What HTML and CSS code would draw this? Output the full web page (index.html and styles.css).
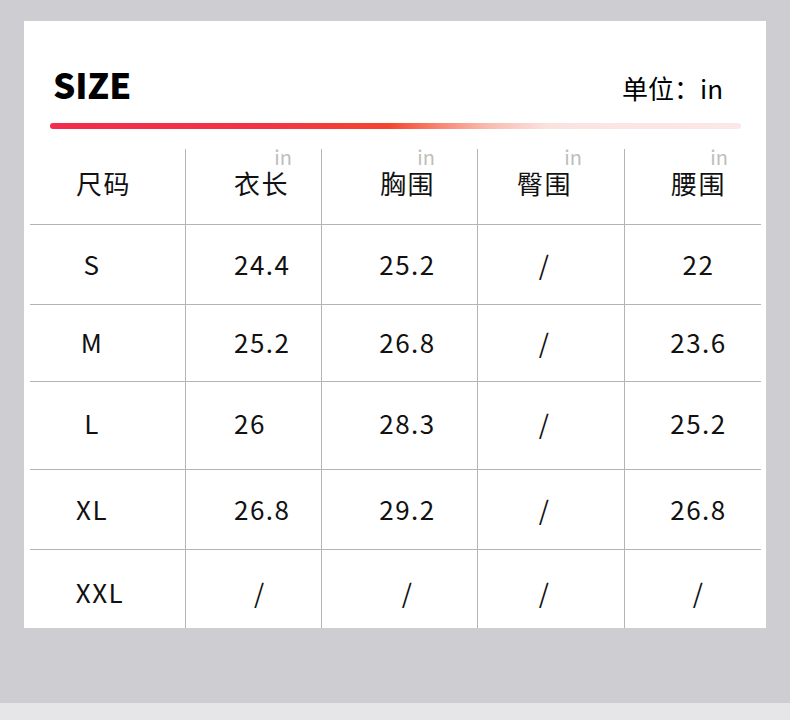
FILE: index.html
```html
<!DOCTYPE html>
<html lang="zh-CN">
<head>
<meta charset="utf-8">
<title>SIZE</title>
<link rel="stylesheet" href="styles.css">
</head>
<body>
<div class="page">
  <div class="card">
    <div class="head">
      <h1 class="title">SIZE</h1>
      <div class="unit-note">单位：in</div>
    </div>
    <div class="bar"></div>
    <div class="table">
      <div class="cell hd c1 hd1">尺码</div>
      <div class="cell hd c2">衣长<span class="in in2">in</span></div>
      <div class="cell hd c3">胸围<span class="in in3">in</span></div>
      <div class="cell hd c4">臀围<span class="in in4">in</span></div>
      <div class="cell hd c5">腰围<span class="in in5">in</span></div>

      <div class="cell c1">S</div>
      <div class="cell c2">24.4</div>
      <div class="cell c3">25.2</div>
      <div class="cell c4">/</div>
      <div class="cell c5">22</div>

      <div class="cell c1">M</div>
      <div class="cell c2">25.2</div>
      <div class="cell c3">26.8</div>
      <div class="cell c4">/</div>
      <div class="cell c5">23.6</div>

      <div class="cell c1 up">L</div>
      <div class="cell c2 up">26</div>
      <div class="cell c3 up">28.3</div>
      <div class="cell c4 up">/</div>
      <div class="cell c5 up">25.2</div>

      <div class="cell c1">XL</div>
      <div class="cell c2">26.8</div>
      <div class="cell c3">29.2</div>
      <div class="cell c4">/</div>
      <div class="cell c5">26.8</div>

      <div class="cell c1 xxl down">XXL</div>
      <div class="cell c2 slash down">/</div>
      <div class="cell c3 down">/</div>
      <div class="cell c4 down">/</div>
      <div class="cell c5 down">/</div>
    </div>
  </div>
</div>
<div class="strip"></div>
</body>
</html>
```

FILE: styles.css
```css
* { box-sizing: border-box; }

html, body {
  margin: 0;
  padding: 0;
  background: #e6e6e8;
}

body {
  font-family: "Noto Sans CJK SC", "Noto Sans", sans-serif;
  color: #111;
}

.page {
  height: 703px;
  background: #cdcdd2;
  padding-top: 21px;
}

.strip {
  height: 17px;
  background: #e6e6e8;
}

.card {
  margin-left: 24px;
  width: 742px;
  height: 607px;
  background: #fff;
  overflow: hidden;
}

.head {
  display: flex;
  justify-content: space-between;
  align-items: baseline;
  padding: 40px 43px 0 29px;
  height: 102px;
}

.title {
  margin: 0;
  font-size: 35px;
  font-weight: 900;
  line-height: 46px;
  color: #000;
}

.unit-note {
  font-size: 26px;
  line-height: 46px;
  color: #000;
}

.bar {
  height: 6px;
  margin: 0 25px 0 26px;
  border-radius: 3px;
  background: linear-gradient(to right,
    #f22c4c 0%,
    #f33344 30%,
    #f4452f 49%,
    #f7836f 56%,
    #f9b9ad 63%,
    #fbe2df 72%,
    #fce8e8 100%);
}

.table {
  margin: 20px 5px 0 6px;
  display: grid;
  grid-template-columns: 155px 136px 156px 147px 137px;
  grid-template-rows: 75px 80px 77px 88px 80px 79px;
}

.cell {
  display: flex;
  align-items: center;
  justify-content: center;
  font-size: 26px;
  line-height: 26px;
  letter-spacing: 1.5px;
  color: #111;
  border-top: 1px solid #b4b4b4;
  padding-bottom: 2px;
}

.cell.up { padding-bottom: 6px; }
.cell.down { padding-bottom: 0; padding-top: 6px; }

.cell.hd {
  border-top: none;
  position: relative;
  padding-bottom: 7px;
}

.c2, .c3, .c4, .c5 {
  border-left: 1px solid #b4b4b4;
}

.c1 { padding-right: 31px; }
.c1.hd1 { padding-right: 8px; }
.c1.xxl { padding-right: 15px; }

.c2 { justify-content: flex-start; padding-left: 48px; }
.c2.slash { padding-left: 68px; }

.c3 { padding-left: 16px; }
.c4 { padding-right: 13px; }
.c5 { padding-left: 11px; }

.in {
  position: absolute;
  top: 1px;
  font-size: 20px;
  line-height: 14px;
  letter-spacing: 0;
  color: #bdbdbd;
}

.in2 { right: 29px; }
.in3 { right: 42px; }
.in4 { right: 42px; }
.in5 { right: 33px; }
```
